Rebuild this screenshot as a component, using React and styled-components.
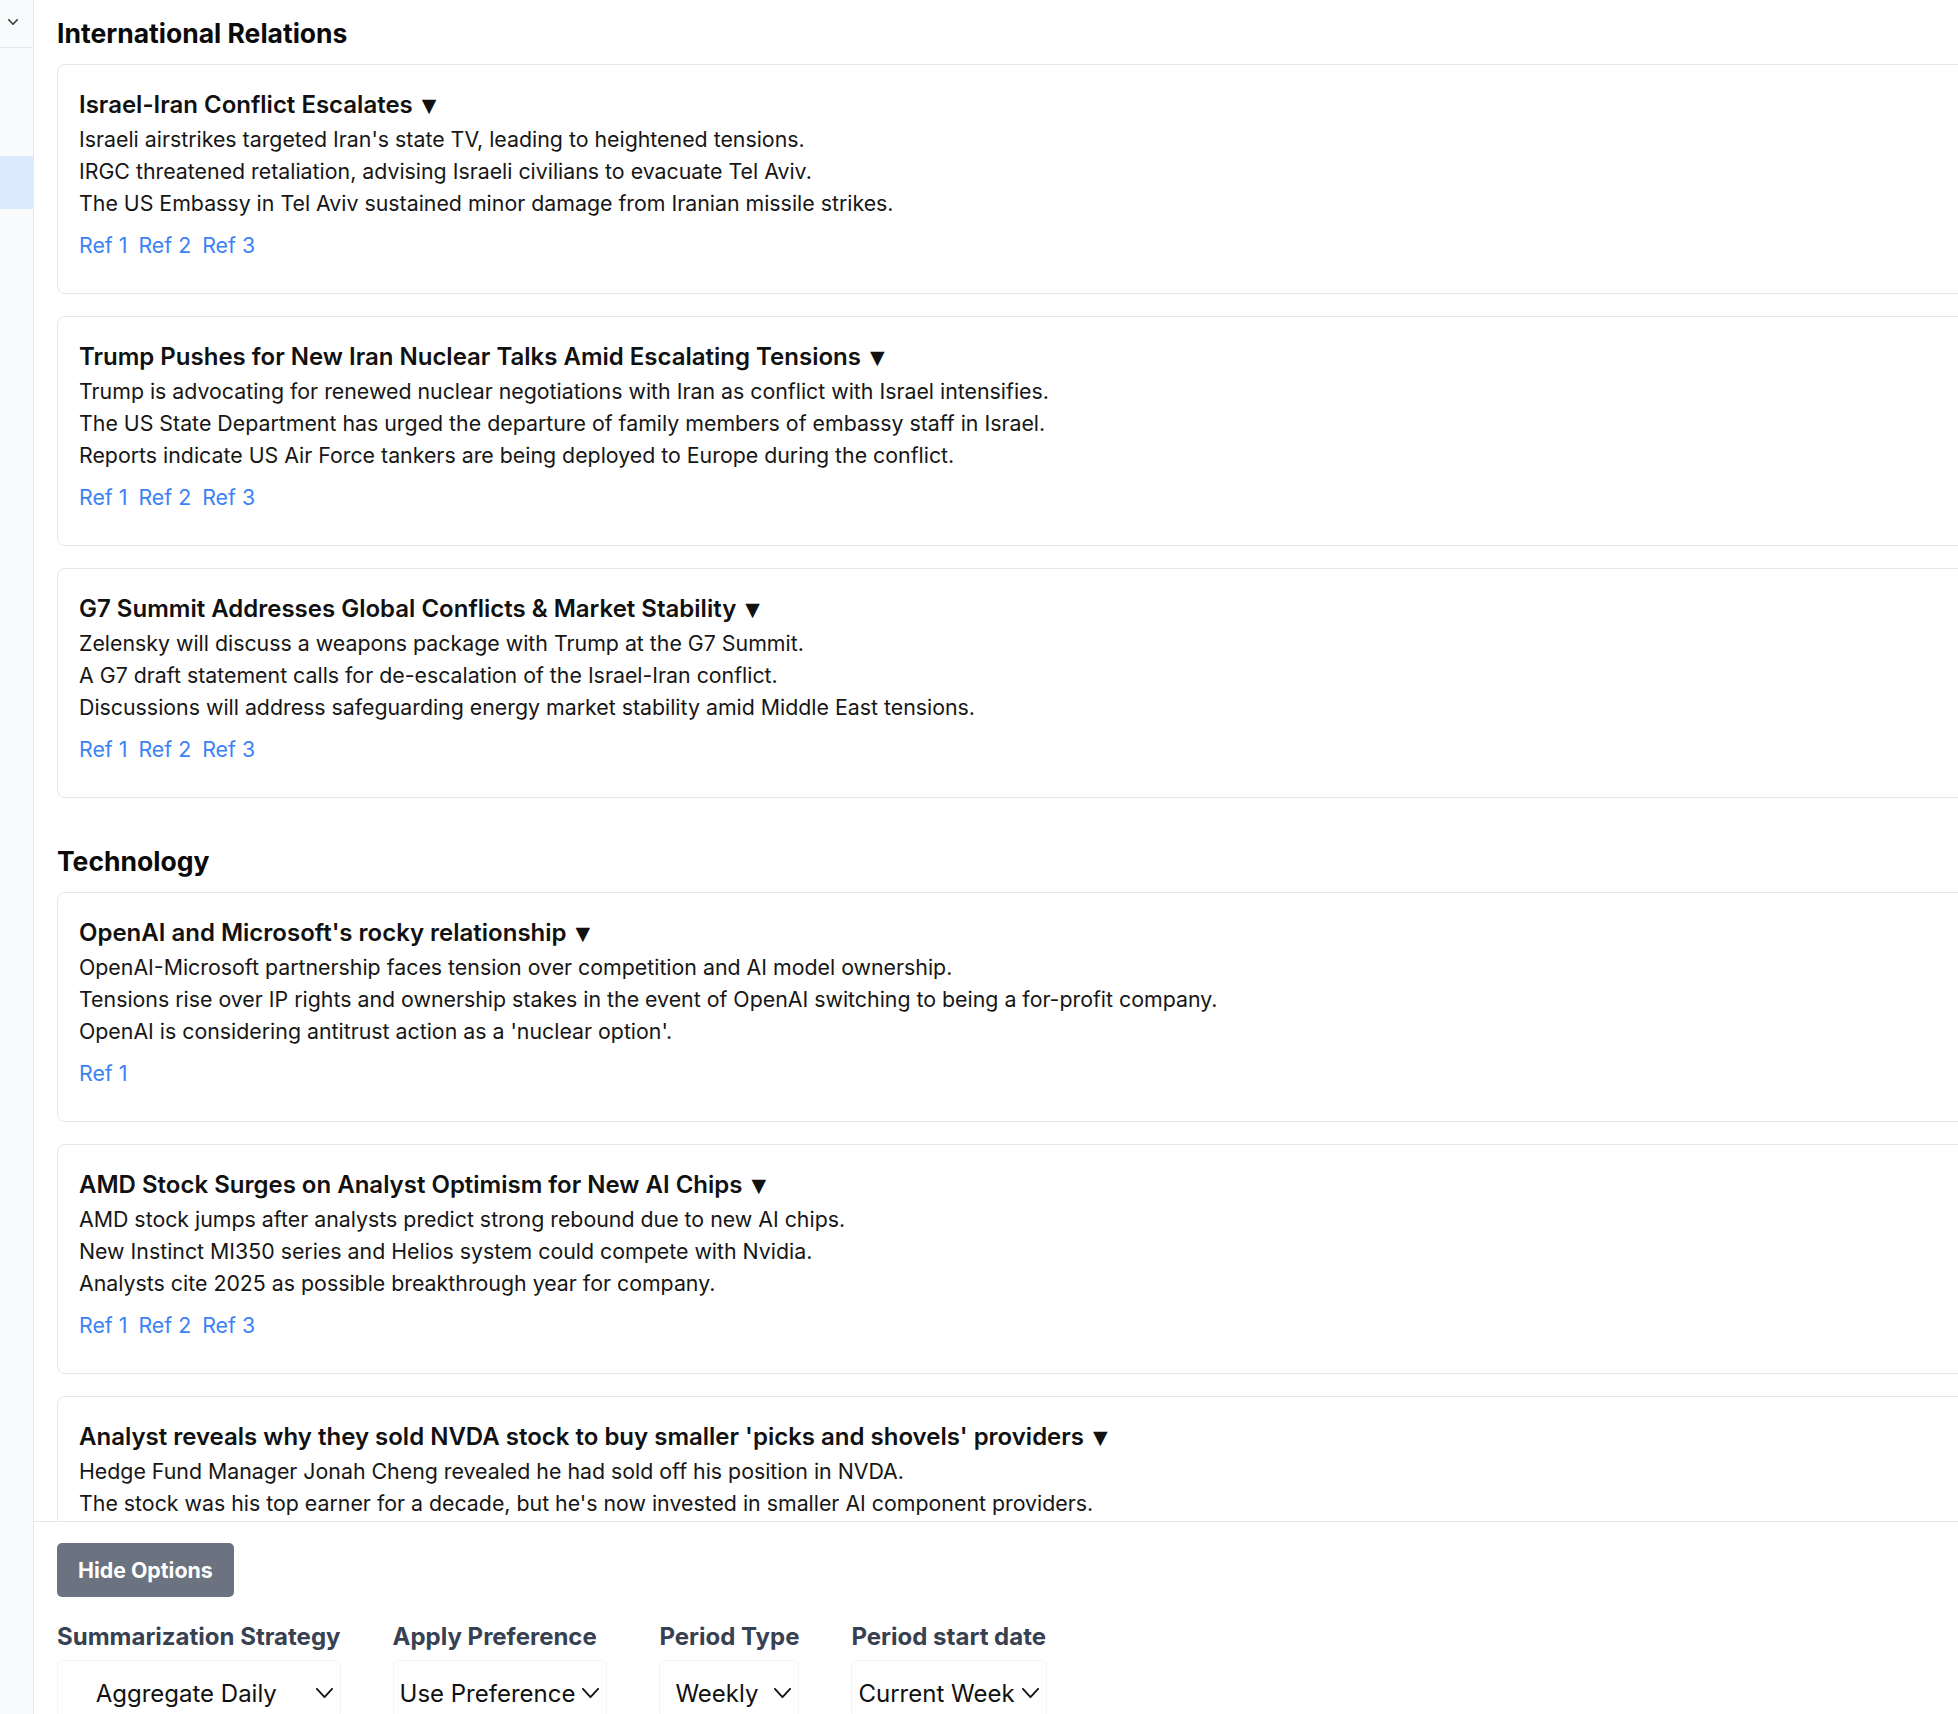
import React from 'react';
import styled, { createGlobalStyle } from 'styled-components';

const sections = [
  {
    title: 'International Relations',
    stories: [
      {
        headline: 'Israel-Iran Conflict Escalates',
        points: [
          "Israeli airstrikes targeted Iran's state TV, leading to heightened tensions.",
          'IRGC threatened retaliation, advising Israeli civilians to evacuate Tel Aviv.',
          'The US Embassy in Tel Aviv sustained minor damage from Iranian missile strikes.',
        ],
        refs: 3,
      },
      {
        headline: 'Trump Pushes for New Iran Nuclear Talks Amid Escalating Tensions',
        points: [
          'Trump is advocating for renewed nuclear negotiations with Iran as conflict with Israel intensifies.',
          'The US State Department has urged the departure of family members of embassy staff in Israel.',
          'Reports indicate US Air Force tankers are being deployed to Europe during the conflict.',
        ],
        refs: 3,
      },
      {
        headline: 'G7 Summit Addresses Global Conflicts & Market Stability',
        points: [
          'Zelensky will discuss a weapons package with Trump at the G7 Summit.',
          'A G7 draft statement calls for de-escalation of the Israel-Iran conflict.',
          'Discussions will address safeguarding energy market stability amid Middle East tensions.',
        ],
        refs: 3,
      },
    ],
  },
  {
    title: 'Technology',
    stories: [
      {
        headline: "OpenAI and Microsoft's rocky relationship",
        points: [
          'OpenAI-Microsoft partnership faces tension over competition and AI model ownership.',
          'Tensions rise over IP rights and ownership stakes in the event of OpenAI switching to being a for-profit company.',
          "OpenAI is considering antitrust action as a 'nuclear option'.",
        ],
        refs: 1,
      },
      {
        headline: 'AMD Stock Surges on Analyst Optimism for New AI Chips',
        points: [
          'AMD stock jumps after analysts predict strong rebound due to new AI chips.',
          'New Instinct MI350 series and Helios system could compete with Nvidia.',
          'Analysts cite 2025 as possible breakthrough year for company.',
        ],
        refs: 3,
      },
      {
        headline: "Analyst reveals why they sold NVDA stock to buy smaller 'picks and shovels' providers",
        points: [
          'Hedge Fund Manager Jonah Cheng revealed he had sold off his position in NVDA.',
          "The stock was his top earner for a decade, but he's now invested in smaller AI component providers.",
        ],
        refs: 3,
      },
    ],
  },
];

const options = [
  { label: 'Summarization Strategy', value: 'Aggregate Daily' },
  { label: 'Apply Preference', value: 'Use Preference' },
  { label: 'Period Type', value: 'Weekly' },
  { label: 'Period start date', value: 'Current Week' },
];

const GlobalStyle = createGlobalStyle`
  html, body {
    margin: 0;
    padding: 0;
    height: 100%;
    overflow: hidden;
  }
  body {
    font-family: Inter, "Noto Sans", sans-serif;
    background: #ffffff;
    color: #111111;
  }
  #root {
    height: 100%;
  }
`;

const Chevron = ({ width, height, strokeWidth, color }) => (
  <svg
    width={width}
    height={height}
    viewBox={`0 0 ${width} ${height}`}
    fill="none"
    stroke={color}
    strokeWidth={strokeWidth}
    strokeLinecap="round"
    strokeLinejoin="round"
  >
    <polyline
      points={`${strokeWidth / 2},${strokeWidth / 2} ${width / 2},${height - strokeWidth / 2} ${
        width - strokeWidth / 2
      },${strokeWidth / 2}`}
    />
  </svg>
);

const App = () => {
  return (
    <>
      <GlobalStyle />
      <Layout>
        <Sidebar>
          <SidebarTop>
            <Chevron width={10} height={6} strokeWidth={1.5} color="#333" />
          </SidebarTop>
          <SidebarItem $active />
        </Sidebar>
        <MainColumn>
          <Feed>
            {sections.map((section) => (
              <Section key={section.title}>
                <SectionTitle>{section.title}</SectionTitle>
                {section.stories.map((story) => (
                  <Card key={story.headline}>
                    <CardTitle>
                      {story.headline}
                      <Toggle>▼</Toggle>
                    </CardTitle>
                    {story.points.map((p) => (
                      <Point key={p}>{p}</Point>
                    ))}
                    <Refs>
                      {Array.from({ length: story.refs }, (_, i) => (
                        <RefLink key={i} href="#">
                          Ref {i + 1}
                        </RefLink>
                      ))}
                    </Refs>
                  </Card>
                ))}
              </Section>
            ))}
          </Feed>
          <Footer>
            <HideButton>Hide Options</HideButton>
            <OptionsRow>
              {options.map((opt) => (
                <Field key={opt.label}>
                  <FieldLabel>{opt.label}</FieldLabel>
                  <SelectBox>
                    <SelectValue>{opt.value}</SelectValue>
                    <Chevron width={17} height={10} strokeWidth={1.8} color="#111" />
                  </SelectBox>
                </Field>
              ))}
            </OptionsRow>
          </Footer>
        </MainColumn>
      </Layout>
    </>
  );
};

const Layout = styled.div`
  display: flex;
  width: 100vw;
  height: 100vh;
  overflow: hidden;
`;

const Sidebar = styled.aside`
  width: 34px;
  flex-shrink: 0;
  box-sizing: border-box;
  background: #f9fafb;
  border-right: 1px solid #e5e7eb;
  display: flex;
  flex-direction: column;
`;

const SidebarTop = styled.div`
  height: 48px;
  box-sizing: border-box;
  border-bottom: 1px solid #e5e7eb;
  display: flex;
  align-items: flex-start;
  padding: 19px 0 0 8px;
`;

const SidebarItem = styled.div`
  margin-top: 108px;
  height: 53px;
  background: ${(props) => (props.$active ? '#dbeafe' : 'transparent')};
`;

const MainColumn = styled.div`
  flex: 1;
  min-width: 0;
  display: flex;
  flex-direction: column;
`;

const Feed = styled.main`
  flex: 1;
  min-height: 0;
  overflow: hidden;
  padding: 16px 0 0 23px;
`;

const Section = styled.section`
  & + & {
    margin-top: 46px;
  }
`;

const SectionTitle = styled.h2`
  margin: 0 0 13px;
  font-size: 26.5px;
  font-weight: 700;
  line-height: 35px;
  color: #0a0a0a;
`;

const Card = styled.article`
  width: calc(100% + 80px);
  box-sizing: border-box;
  border: 1px solid #e5e7eb;
  border-radius: 8px;
  padding: 22px 21px;
  margin-bottom: 22px;
  background: #fff;
`;

const CardTitle = styled.h3`
  margin: 0;
  font-size: 24px;
  font-weight: 600;
  line-height: 35px;
  color: #111111;
`;

const Toggle = styled.span`
  margin-left: 9px;
  font-family: 'DejaVu Sans', sans-serif;
  font-size: 19px;
  vertical-align: 1px;
`;

const Point = styled.p`
  margin: 0;
  font-size: 21.33px;
  line-height: 32px;
  color: #161616;
`;

const Refs = styled.div`
  display: flex;
  gap: 11px;
  margin: 10px 0;
  line-height: 32px;
`;

const RefLink = styled.a`
  font-size: 21.33px;
  color: #3b82f6;
  text-decoration: none;
`;

const Footer = styled.footer`
  height: 193px;
  flex-shrink: 0;
  box-sizing: border-box;
  border-top: 1px solid #e5e7eb;
  background: #fff;
  padding: 21px 23px 0;
  overflow: hidden;
`;

const HideButton = styled.button`
  height: 54px;
  padding: 0 21px;
  border: none;
  border-radius: 5px;
  background: #6b7280;
  color: #fff;
  font-family: Inter, sans-serif;
  font-size: 21.33px;
  font-weight: 700;
  cursor: pointer;
`;

const OptionsRow = styled.div`
  display: flex;
  gap: 52px;
  margin-top: 24px;
`;

const Field = styled.div`
  display: flex;
  flex-direction: column;
  gap: 7px;
`;

const FieldLabel = styled.label`
  font-size: 24px;
  font-weight: 700;
  line-height: 32px;
  color: #374151;
`;

const SelectBox = styled.div`
  display: flex;
  align-items: center;
  gap: 7px;
  height: 58px;
  box-sizing: border-box;
  padding: 8px 7px 0 6px;
  border: 1px solid #f3f4f6;
  border-radius: 6px;
  font-size: 24px;
  color: #111;
`;

const SelectValue = styled.span`
  flex: 1;
  text-align: center;
  white-space: nowrap;
`;

export default App;
